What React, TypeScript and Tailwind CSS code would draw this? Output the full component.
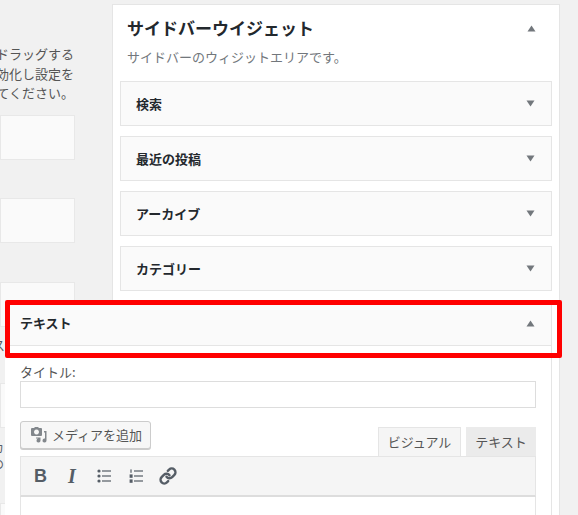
const FONT = "font-['Noto_Sans_CJK_JP','Noto_Sans',sans-serif]";

function Tri({ up }: { up?: boolean }) {
  return (
    <svg width="9" height="7" viewBox="0 0 9 7" className="shrink-0">
      <path d={up ? "M4.5 0.5 L8.5 6.5 L0.5 6.5 Z" : "M0.5 0.5 L8.5 0.5 L4.5 6.5 Z"} fill="#72777c" />
    </svg>
  );
}

function LeftCard({ className }: { className: string }) {
  return <div className={`w-[75px] h-[45px] bg-[#fafafa] border border-[#e8e8e8] ${className}`} />;
}

function Item({ label }: { label: string }) {
  return (
    <div className="h-[45px] flex items-center justify-between pl-[15px] pr-[16px] bg-[#fafafa] border border-[#e5e5e5]">
      <span className="text-[13px] font-bold text-[#23282d]">{label}</span>
      <Tri />
    </div>
  );
}

function MediaIcon() {
  return (
    <svg width="18" height="16" viewBox="0 0 18 16" fill="#82878c">
      <path d="M3 1 h2 l1 -1 h3 l1 1 h2 a1 1 0 0 1 1 1 v6 a1 1 0 0 1 -1 1 h-9 a1 1 0 0 1 -1 -1 v-6 a1 1 0 0 1 1 -1 z M7.5 2.5 a2.5 2.5 0 1 0 .01 0 z" fillRule="evenodd" />
      <path d="M15 4 h2.5 v9.5 a2 2 0 1 1 -1.5 -1.9 v-6.1 h-1 z" />
      <path d="M7 10.5 h4.5 v3 a2 2 0 1 1 -1.5 -1.9 v-0.1 h-3 z" />
    </svg>
  );
}

function BulletIcon() {
  return (
    <svg width="14" height="14" viewBox="0 0 14 14" fill="#555d66">
      <circle cx="2" cy="2" r="1.6" /><circle cx="2" cy="7" r="1.6" /><circle cx="2" cy="12" r="1.6" />
      <rect x="5" y="1.4" width="9" height="1.2" /><rect x="5" y="6.4" width="9" height="1.2" /><rect x="5" y="11.4" width="9" height="1.2" />
    </svg>
  );
}

function NumberIcon() {
  return (
    <svg width="14" height="14" viewBox="0 0 14 14" fill="#555d66">
      <rect x="1.4" y="0.4" width="1.2" height="3.4" /><rect x="0.6" y="5.4" width="3" height="3.4" /><rect x="0.6" y="10.4" width="3" height="3.4" />
      <rect x="5" y="1.4" width="9" height="1.2" /><rect x="5" y="6.4" width="9" height="1.2" /><rect x="5" y="11.4" width="9" height="1.2" />
    </svg>
  );
}

function LinkIcon() {
  return (
    <svg width="18" height="18" viewBox="0 0 24 24" fill="none" stroke="#555d66" strokeWidth="3.2" strokeLinecap="round" strokeLinejoin="round">
      <path d="M10 13a5 5 0 0 0 7.54.54l3-3a5 5 0 0 0-7.07-7.07l-1.72 1.71" />
      <path d="M14 11a5 5 0 0 0-7.54-.54l-3 3a5 5 0 0 0 7.07 7.07l1.71-1.71" />
    </svg>
  );
}

export default function App() {
  return (
    <div className={`${FONT} relative w-[578px] h-[515px] overflow-hidden bg-[#f1f1f1] flex items-start text-[#555d66]`}>
      <div className="w-[112px] h-[515px] shrink-0 overflow-hidden pt-[44px]">
        <div className="w-[74px] flex flex-col items-end text-[13px] leading-[19.5px] whitespace-nowrap text-[#555]">
          <span>ドラッグする</span>
          <span>を有効化し設定を</span>
          <span>行ってください。</span>
        </div>
        <LeftCard className="mt-[12px]" />
        <LeftCard className="mt-[38px]" />
        <LeftCard className="mt-[39px]" />
        <div className="w-[74px] h-[56px] pt-[8px] text-[13px] leading-[20px] -ml-[8px]">ス</div>
        <LeftCard className="mt-0" />
        <div className="h-[75px] pt-[12px] text-[12px] leading-[16px] -ml-[8px]">カ<br />の</div>
        <LeftCard className="mt-0" />
      </div>

      <div className="w-[448px] h-[530px] mt-[4px] shrink-0 bg-white border border-[#e5e5e5] px-[7px]">
        <div className="flex items-center justify-between h-[26px] mt-[10px] pl-[7px] pr-[16px]">
          <span className="text-[17px] font-bold text-[#23282d]">サイドバーウイジェット</span>
          <Tri up />
        </div>
        <p className="mt-[6px] h-[20px] leading-[20px] pl-[7px] text-[13px] text-[#72777c]">サイドバーのウィジットエリアです。</p>
        <div className="mt-[14px] flex flex-col gap-[10px]">
          <Item label="検索" />
          <Item label="最近の投稿" />
          <Item label="アーカイブ" />
          <Item label="カテゴリー" />

          <div className="relative -ml-[115px] w-[547px] bg-white border-r border-[#e5e5e5] h-[220px]">
            <div className="h-[45px] flex items-center justify-between pl-[15px] pr-[16px] bg-[#fafafa] border-b border-[#e5e5e5]">
              <span className="text-[13px] font-bold text-[#23282d]">テキスト</span>
              <Tri up />
            </div>
            <div className="px-[15px] pt-[17px]">
              <div className="h-[18px] leading-[18px] text-[13px] text-[#555]">タイトル:</div>
              <div className="h-[27px] bg-white border border-[#ddd]" />
              <div className="mt-[13px] h-[35px] flex items-start justify-between">
                <div className="w-[131px] h-[28px] flex items-center gap-[5px] pl-[8px] bg-[#f7f7f7] border border-[#ccc] rounded-[3px] shadow-[0_1px_0_#ccc] text-[13px] text-[#555]">
                  <MediaIcon />
                  <span>メディアを追加</span>
                </div>
                <div className="flex items-end gap-[5px] h-[35px]">
                  <div className="w-[83px] h-[29px] flex items-center justify-center bg-[#f5f5f5] border border-b-0 border-[#e5e5e5] text-[13px] text-[#555]">ビジュアル</div>
                  <div className="w-[70px] h-[29px] flex items-center justify-center bg-[#ebebeb] text-[13px] text-[#555]">テキスト</div>
                </div>
              </div>
              <div className="h-[41px] flex items-center bg-[#f5f5f5] border border-b-2 border-[#e5e5e5] border-b-[#ddd]">
                <span className="w-[39px] text-center font-['Liberation_Sans',sans-serif] font-bold text-[18px] leading-none text-[#555d66]">B</span>
                <span className="w-[24px] text-center font-['Liberation_Serif',serif] font-bold italic text-[20px] leading-none text-[#555d66]">I</span>
                <span className="ml-[13px] w-[32px]"><BulletIcon /></span>
                <span className="w-[30px]"><NumberIcon /></span>
                <LinkIcon />
              </div>
              <div className="h-[40px] bg-white border-x border-[#e5e5e5]" />
            </div>
            <div className="absolute left-0 top-[-1px] w-[557px] h-[58px] border-[5px] border-[#f00] rounded-[2px]" />
          </div>
        </div>
      </div>
    </div>
  );
}
